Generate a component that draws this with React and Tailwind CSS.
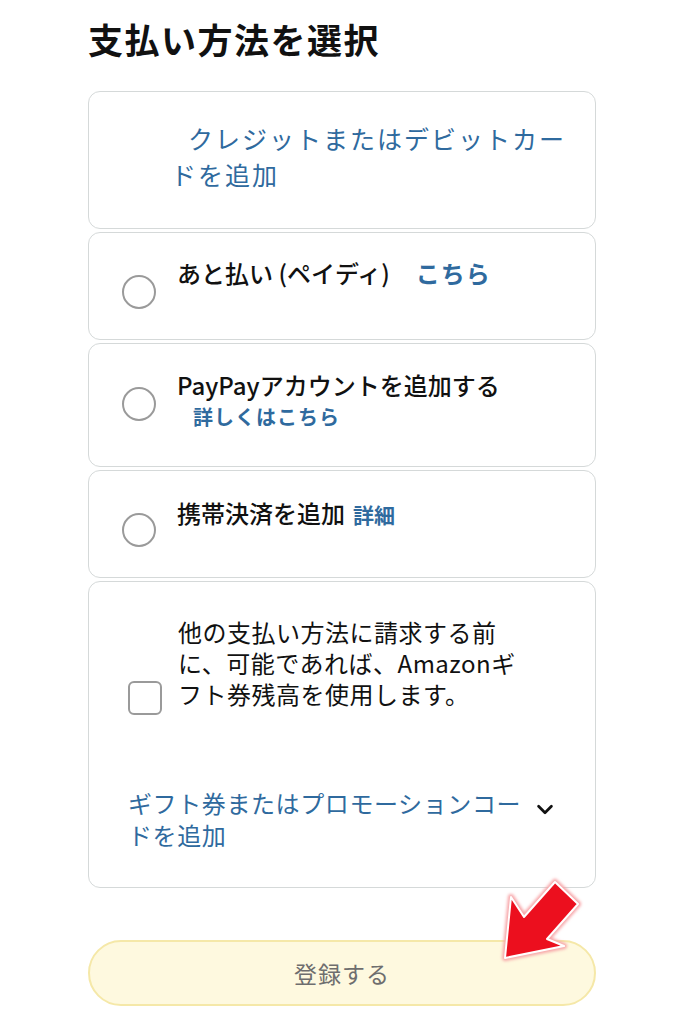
import React from "react";

const font = { fontFamily: '"Noto Sans CJK JP", "Noto Sans", sans-serif' };

function Radio({ mt }) {
  return (
    <div className={`w-[34px] h-[34px] shrink-0 rounded-full border-2 border-[#9a9a9a] bg-white ${mt}`} />
  );
}

export default function App() {
  return (
    <div className="relative w-[683px] h-[1024px] bg-white overflow-hidden" style={font}>
      <div className="ml-[88px] w-[508px] pt-[14px]">
        <h1 className="text-[35px] leading-[50px] font-bold text-[#111] tracking-[1.5px]">支払い方法を選択</h1>

        <div className="mt-[27px] flex flex-col gap-[3px]">
          {/* card 1 */}
          <div className="h-[138px] rounded-[12px] border border-[#d5d9d9] pt-[28px] pl-[82px] pr-[20px]">
            <p className="text-[25px] leading-[36px] text-[#2f6a9e] tracking-[2px] indent-[17px]">
              クレジットまたはデビットカードを追加
            </p>
          </div>

          {/* card 2 */}
          <div className="h-[108px] rounded-[12px] border border-[#d5d9d9] pt-[24px] pl-[33px] flex gap-[21px]">
            <Radio mt="mt-[18px]" />
            <p className="text-[24px] leading-[32px] font-medium text-[#111]">
              あと払い (ペイディ)
              <span className="ml-[26px] text-[#2f6a9e] font-bold tracking-[1px]">こちら</span>
            </p>
          </div>

          {/* card 3 */}
          <div className="h-[124px] rounded-[12px] border border-[#d5d9d9] pt-[25px] pl-[33px] flex gap-[21px]">
            <Radio mt="mt-[18px]" />
            <div>
              <p className="text-[24px] leading-[32px] font-medium text-[#111]">PayPayアカウントを追加する</p>
              <p className="ml-[16px] text-[20px] leading-[32px] font-bold text-[#2f6a9e] tracking-[1px]">詳しくはこちら</p>
            </div>
          </div>

          {/* card 4 */}
          <div className="h-[108px] rounded-[12px] border border-[#d5d9d9] pt-[26px] pl-[33px] flex gap-[21px]">
            <Radio mt="mt-[16px]" />
            <p className="text-[24px] leading-[32px] font-medium text-[#111]">
              携帯決済を追加
              <span className="ml-[8px] text-[21px] text-[#2f6a9e] font-bold">詳細</span>
            </p>
          </div>

          {/* card 5 */}
          <div className="h-[307px] rounded-[12px] border border-[#d5d9d9] pt-[34px] pl-[39px] pr-[20px]">
            <div className="flex gap-[16px]">
              <div className="mt-[65px] w-[34px] h-[34px] shrink-0 rounded-[6px] border-2 border-[#9a9a9a] bg-white" />
              <p className="w-[338px] text-[24px] leading-[31px] text-[#111] tracking-[0.5px]">
                他の支払い方法に請求する前に、可能であれば、Amazonギフト券残高を使用します。
              </p>
            </div>
            <div className="mt-[72px] flex items-start">
              <p className="w-[400px] whitespace-nowrap text-[24px] leading-[32px] text-[#2f6a9e] tracking-[0.6px]">
                ギフト券またはプロモーションコー
                <br />
                ドを追加
              </p>
              <svg className="ml-[6px] mt-[11px]" width="22" height="22" viewBox="0 0 24 24" fill="none">
                <path d="M5 9l7 7 7-7" stroke="#111" strokeWidth="3" strokeLinecap="round" strokeLinejoin="round" />
              </svg>
            </div>
          </div>
        </div>

        {/* button */}
        <div className="mt-[52px] h-[66px] rounded-full border-2 border-[#f5e8a8] bg-[#fef9df] flex items-center justify-center">
          <span className="text-[23px] text-[#6e6e6e] tracking-[1px]">登録する</span>
        </div>
      </div>

      {/* red arrow overlay */}
      <svg className="absolute left-0 top-0 pointer-events-none" width="683" height="1024" viewBox="0 0 683 1024">
        <defs>
          <filter id="glow" x="-20%" y="-20%" width="140%" height="140%">
            <feGaussianBlur stdDeviation="1.5" />
          </filter>
        </defs>
        <polygon
          points="505,958 511,897 524,917 555,882 578,904 547,939 564,946"
          fill="none"
          stroke="#f7a5a8"
          strokeWidth="6"
          strokeLinejoin="round"
          filter="url(#glow)"
        />
        <polygon
          points="505,958 511,897 524,917 555,882 578,904 547,939 564,946"
          fill="#ec0f1e"
          stroke="#ffffff"
          strokeWidth="2"
          strokeLinejoin="round"
        />
      </svg>
    </div>
  );
}
